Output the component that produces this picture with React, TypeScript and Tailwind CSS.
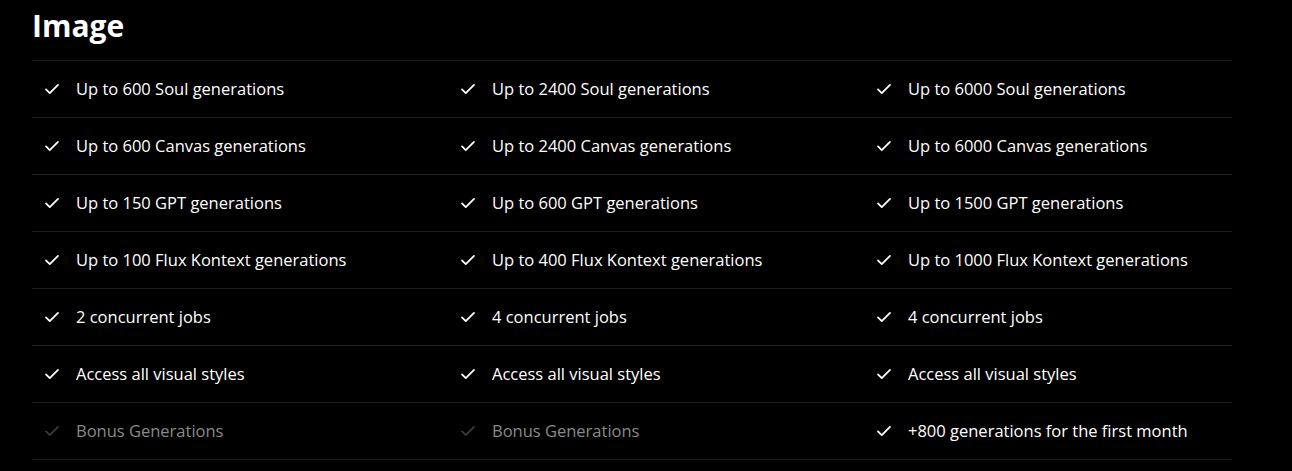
import React from "react";

type Cell = { text: string; off?: boolean };

const rows: Cell[][] = [
  [{ text: "Up to 600 Soul generations" }, { text: "Up to 2400 Soul generations" }, { text: "Up to 6000 Soul generations" }],
  [{ text: "Up to 600 Canvas generations" }, { text: "Up to 2400 Canvas generations" }, { text: "Up to 6000 Canvas generations" }],
  [{ text: "Up to 150 GPT generations" }, { text: "Up to 600 GPT generations" }, { text: "Up to 1500 GPT generations" }],
  [{ text: "Up to 100 Flux Kontext generations" }, { text: "Up to 400 Flux Kontext generations" }, { text: "Up to 1000 Flux Kontext generations" }],
  [{ text: "2 concurrent jobs" }, { text: "4 concurrent jobs" }, { text: "4 concurrent jobs" }],
  [{ text: "Access all visual styles" }, { text: "Access all visual styles" }, { text: "Access all visual styles" }],
  [{ text: "Bonus Generations", off: true }, { text: "Bonus Generations", off: true }, { text: "+800 generations for the first month" }],
];

const Check = ({ off }: { off?: boolean }) => (
  <svg width="18" height="18" viewBox="0 0 24 24" fill="none" stroke="currentColor" strokeWidth="2.4" strokeLinecap="round" strokeLinejoin="round" className={off ? "text-[#3a3a3a]" : "text-white"}>
    <path d="M4 12.5l5 5L20 6.5" />
  </svg>
);

const App = () => {
  return (
    <div className="min-h-[471px] bg-black text-white" style={{ fontFamily: '"Open Sans", "Noto Sans", sans-serif' }}>
      <div className="w-[1200px] ml-8 pt-[8px]">
        <h2 className="text-[30px] leading-[36px] font-bold mb-[16px]">Image</h2>
        <div className="border-t border-[#1c1c1c]">
          {rows.map((row, i) => (
            <div className="grid grid-cols-[416px_416px_1fr] h-[57px] items-center border-b border-[#1c1c1c]" key={i}>
              {row.map((cell, j) => (
                <div className="flex items-center pl-[11px]" key={j}>
                  <Check off={cell.off} />
                  <span className={`ml-[15px] text-[16.5px] ${cell.off ? "text-[#8a8a8a]" : "text-white"}`}>{cell.text}</span>
                </div>
              ))}
            </div>
          ))}
        </div>
      </div>
    </div>
  );
};

export default App;
